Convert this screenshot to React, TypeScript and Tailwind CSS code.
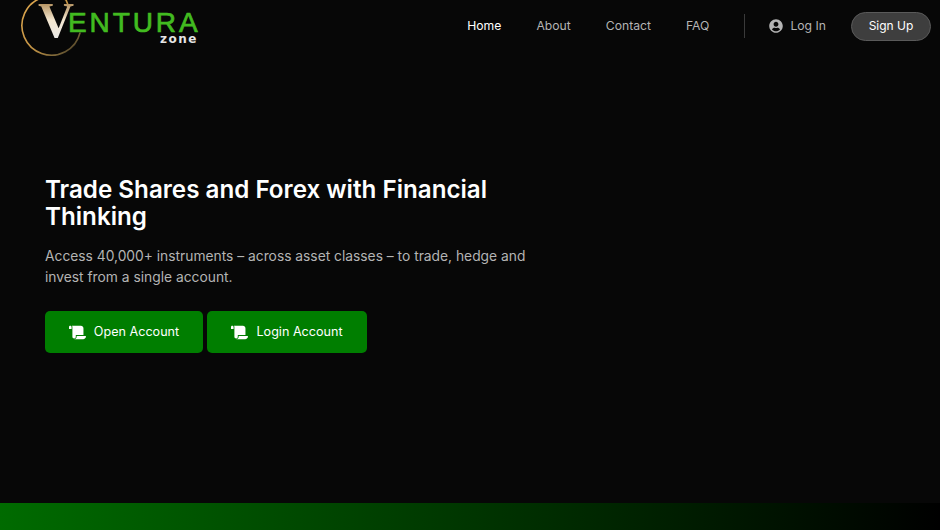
import { FaScroll, FaUserCircle } from "react-icons/fa";

const navLinks = ["About", "Contact", "FAQ"];

const Logo = () => (
    <div className="relative w-[200px] h-[52px] ml-[20px] shrink-0">
        <svg className="absolute left-0 -top-[5px]" width="62" height="62" viewBox="0 0 62 62" fill="none">
            <defs>
                <linearGradient id="ring" x1="0" y1="0" x2="1" y2="1">
                    <stop offset="0" stopColor="#e0a84e" />
                    <stop offset="0.55" stopColor="#c29345" />
                    <stop offset="0.8" stopColor="#7a6538" />
                    <stop offset="1" stopColor="#2a2418" />
                </linearGradient>
            </defs>
            <path d="M48 13 Q48 8 46 5 A29.5 29.5 0 1 0 60 38" stroke="url(#ring)" strokeWidth="1.6" strokeLinecap="round" />
        </svg>
        <span className="absolute left-[18px] top-0 font-['Liberation_Serif',serif] font-bold text-[50px] leading-[40px] bg-gradient-to-b from-[#a8824a] via-[#f3e6cf] to-[#e8e8e8] bg-clip-text text-transparent">
            V
        </span>
        <span className="absolute left-[48px] top-[12px] font-['Liberation_Sans',sans-serif] text-[28px] leading-[22px] tracking-[2.9px] text-[#42bb20] [-webkit-text-stroke:0.7px_#42bb20]">
            ENTURA
        </span>
        <span className="absolute left-[140px] top-[34px] font-['DejaVu_Sans',sans-serif] font-bold text-[12px] leading-[10px] tracking-[1.5px] text-[#e4e4e4]">
            zone
        </span>
    </div>
);

const ActionButton = ({ label, width }: { label: string; width: string }) => (
    <button className={`flex items-center justify-center gap-[8px] h-[42px] ${width} rounded-[5px] bg-[#007e00] text-white text-[12.6px]`}>
        <FaScroll className="text-[17px]" />
        {label}
    </button>
);

export default function App() {
    return (
        <div className="flex flex-col w-[940px] h-[530px] overflow-hidden bg-[#070707] font-['Inter',sans-serif]">
            <header className="flex items-start justify-between h-[52px] pr-[9px] shrink-0">
                <Logo />
                <nav className="flex items-center h-[52px] text-[12.2px] text-[#b4b4b4]">
                    <a className="text-white mr-[35px]">Home</a>
                    {navLinks.map((link) => (
                        <a key={link} className="mr-[35px]">{link}</a>
                    ))}
                    <div className="w-px h-[24px] bg-[#3a3a3a] mr-[24px]" />
                    <a className="flex items-center gap-[7px] mr-[25px]">
                        <FaUserCircle className="text-[14px]" />
                        Log In
                    </a>
                    <button className="w-[80px] h-[29px] rounded-full border border-[#5a5a5a] bg-[#3e3e3e] text-white text-[12px]">
                        Sign Up
                    </button>
                </nav>
            </header>
            <main className="flex-1 flex flex-col pl-[45px] pt-[124px]">
                <h1 className="w-[480px] text-[24.2px] leading-[27px] font-semibold text-white">
                    Trade Shares and Forex with Financial Thinking
                </h1>
                <p className="w-[500px] mt-[16px] text-[13.8px] leading-[21px] text-[#b4b4b4]">
                    Access 40,000+ instruments – across asset classes – to trade, hedge and invest from a single account.
                </p>
                <div className="flex gap-[4px] mt-[23px]">
                    <ActionButton label="Open Account" width="w-[158px]" />
                    <ActionButton label="Login Account" width="w-[160px]" />
                </div>
            </main>
            <div className="h-[27px] shrink-0 bg-linear-to-r/srgb from-[#006b00] to-black" />
        </div>
    );
}
